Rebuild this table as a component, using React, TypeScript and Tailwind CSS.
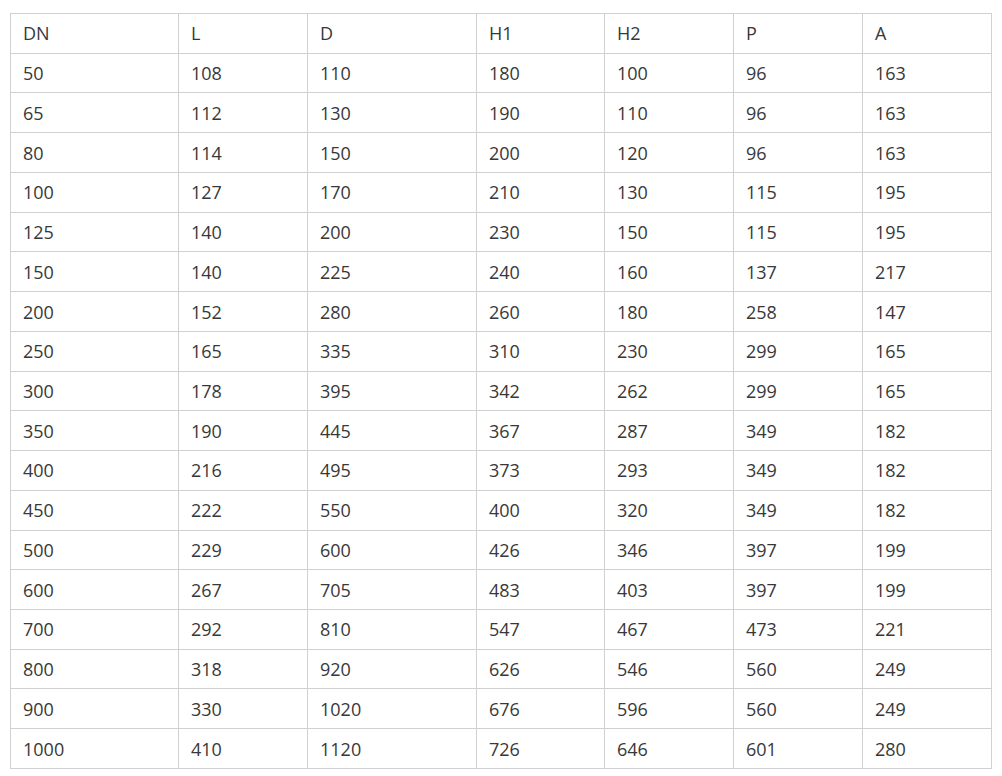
const headers = ["DN", "L", "D", "H1", "H2", "P", "A"];

const rows: number[][] = [
  [50, 108, 110, 180, 100, 96, 163],
  [65, 112, 130, 190, 110, 96, 163],
  [80, 114, 150, 200, 120, 96, 163],
  [100, 127, 170, 210, 130, 115, 195],
  [125, 140, 200, 230, 150, 115, 195],
  [150, 140, 225, 240, 160, 137, 217],
  [200, 152, 280, 260, 180, 258, 147],
  [250, 165, 335, 310, 230, 299, 165],
  [300, 178, 395, 342, 262, 299, 165],
  [350, 190, 445, 367, 287, 349, 182],
  [400, 216, 495, 373, 293, 349, 182],
  [450, 222, 550, 400, 320, 349, 182],
  [500, 229, 600, 426, 346, 397, 199],
  [600, 267, 705, 483, 403, 397, 199],
  [700, 292, 810, 547, 467, 473, 221],
  [800, 318, 920, 626, 546, 560, 249],
  [900, 330, 1020, 676, 596, 560, 249],
  [1000, 410, 1120, 726, 646, 601, 280],
];

const widths = [168, 129, 169, 128, 129, 129, 129];

export default function App() {
  return (
    <div className="w-[1002px] h-[776px] bg-white pt-[13px] pl-[10px] font-['Open_Sans',sans-serif] text-[18px] text-[#383838]">
      <table className="table-fixed border-collapse w-[982px]">
        <colgroup>
          {widths.map((w, i) => (
            <col key={i} style={{ width: w }} />
          ))}
        </colgroup>
        <tbody>
          <tr className="h-[39.74px]">
            {headers.map((h) => (
              <td key={h} className="border border-[#d0d0d0] px-[12px] py-0 leading-none">
                {h}
              </td>
            ))}
          </tr>
          {rows.map((r, i) => (
            <tr key={i} className="h-[39.74px]">
              {r.map((v, j) => (
                <td key={j} className="border border-[#d0d0d0] px-[12px] py-0 leading-none">
                  {v}
                </td>
              ))}
            </tr>
          ))}
        </tbody>
      </table>
    </div>
  );
}
